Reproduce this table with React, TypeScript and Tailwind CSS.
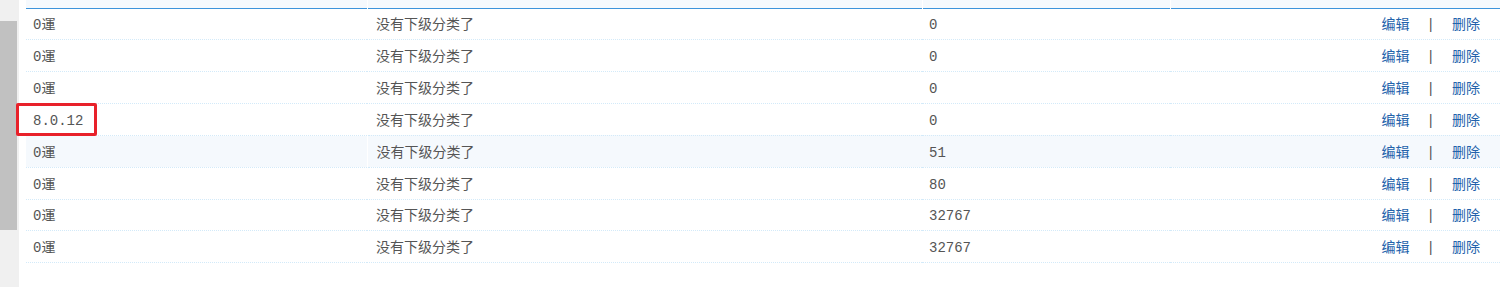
import React from "react";

type Row = { name: string; parent: string; sort: string; hover?: boolean; marked?: boolean };

const rows: Row[] = [
  { name: "0運", parent: "没有下级分类了", sort: "0" },
  { name: "0運", parent: "没有下级分类了", sort: "0" },
  { name: "0運", parent: "没有下级分类了", sort: "0" },
  { name: "8.0.12", parent: "没有下级分类了", sort: "0", marked: true },
  { name: "0運", parent: "没有下级分类了", sort: "51", hover: true },
  { name: "0運", parent: "没有下级分类了", sort: "80" },
  { name: "0運", parent: "没有下级分类了", sort: "32767" },
  { name: "0運", parent: "没有下级分类了", sort: "32767" },
];

const font = "font-['Liberation_Mono','Noto_Sans_CJK_SC',monospace]";

export default function App() {
  return (
    <div className={`flex h-[287px] w-[1502px] bg-white text-[14px] text-[#555] ${font}`}>
      {/* scrollbar */}
      <div className="w-[19px] shrink-0 bg-[#f0f0f0] pt-[21px]">
        <div className="h-[209px] w-[17px] bg-[#c1c1c1]" />
      </div>
      <div className="flex-1 pl-[7px] pr-[2px]">
        <table className="w-full table-fixed border-collapse">
          <colgroup>
            <col className="w-[341px]" />
            <col className="w-[555px]" />
            <col className="w-[248px]" />
            <col />
          </colgroup>
          <thead>
            <tr className="h-[8px] border-b border-[#3d94db] bg-[#f5f9fd]">
              <th className="p-0 border-r border-white" />
              <th className="p-0 border-r border-white" />
              <th className="p-0 border-r border-white" />
              <th className="p-0" />
            </tr>
          </thead>
          <tbody>
            {rows.map((r, i) => (
              <tr
                key={i}
                className={`h-[31.85px] border-b border-dotted border-[#d3eaf9] ${r.hover ? "bg-[#f5f9fd]" : ""}`}
              >
                <td className="relative p-0 pl-[7px] pt-[3px] leading-none">
                  {r.name}
                  {r.marked && (
                    <span className="absolute left-[-10px] top-[-1px] h-[33px] w-[81px] rounded-[2px] border-[3px] border-[#e8212a]" />
                  )}
                </td>
                <td className={`p-0 pl-[9px] pt-[3px] leading-none ${r.hover ? "border-l border-white" : ""}`}>{r.parent}</td>
                <td className="p-0 pl-[7px] pt-[3px] leading-none">{r.sort}</td>
                <td className="p-0 pr-[20px] pt-[3px] text-right leading-none">
                  <a className="text-[#2262ab]">编辑</a>
                  <span className="mx-[17px] text-[#555]">|</span>
                  <a className="text-[#2262ab]">删除</a>
                </td>
              </tr>
            ))}
          </tbody>
        </table>
      </div>
    </div>
  );
}
